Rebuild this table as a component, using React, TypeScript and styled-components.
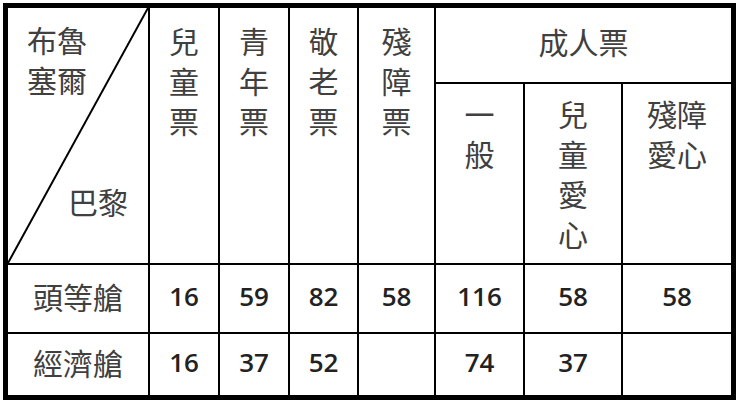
import React from "react";
import styled, { createGlobalStyle } from "styled-components";

const Global = createGlobalStyle`
  html, body { margin: 0; padding: 0; background: #fff; }
  body { font-family: "Noto Sans CJK TC", "Noto Sans", sans-serif; }
`;

const Page = styled.div`
  padding: 3px 0 0 3px;
  background: #fff;
`;

const Frame = styled.div`
  display: grid;
  width: max-content;
  background: #000;
  padding: 5px;
  gap: 2px;
  grid-template-columns: 140px 68px 68px 67px 75px 87px 96px 108px;
  grid-template-rows: 74px 179px 67px 61px;
`;

const Cell = styled.div<{ $col: string; $row: string }>`
  grid-column: ${(p) => p.$col};
  grid-row: ${(p) => p.$row};
  background: #fff;
  min-width: 0;
`;

const CornerCell = styled(Cell)`
  position: relative;
  display: flex;
  flex-direction: column;
  justify-content: space-between;
  padding: 11px 0 42px 19px;
  box-sizing: border-box;
  font-size: 30px;
  line-height: 40px;
  color: #404040;
`;

const CornerTop = styled.div`
  display: flex;
  flex-direction: column;
`;

const CornerBottom = styled.div`
  align-self: flex-end;
  padding-right: 20px;
`;

const Diagonal = styled.svg`
  position: absolute;
  inset: 0;
  width: 100%;
  height: 100%;
  pointer-events: none;
`;

const HeadCell = styled(Cell)<{ $pad: number }>`
  box-sizing: border-box;
  padding-top: ${(p) => p.$pad}px;
  text-align: center;
  font-size: 30px;
  line-height: 40px;
  color: #404040;
`;

const Line = styled.div``;

const LabelCell = styled(Cell)`
  display: flex;
  align-items: center;
  justify-content: center;
  padding-bottom: 6px;
  box-sizing: border-box;
  font-size: 30px;
  color: #404040;
  line-height: 1;
`;

const NumCell = styled(Cell)`
  display: flex;
  align-items: center;
  justify-content: center;
  padding-bottom: 6px;
  box-sizing: border-box;
  font-family: "Open Sans", "Liberation Sans", sans-serif;
  font-size: 26px;
  font-weight: 600;
  color: #222;
  line-height: 1;
`;

const topHeads: { col: number; lines: string[] }[] = [
  { col: 2, lines: ["兒", "童", "票"] },
  { col: 3, lines: ["青", "年", "票"] },
  { col: 4, lines: ["敬", "老", "票"] },
  { col: 5, lines: ["殘", "障", "票"] },
];

const subHeads: { col: number; lines: string[] }[] = [
  { col: 6, lines: ["一", "般"] },
  { col: 7, lines: ["兒", "童", "愛", "心"] },
  { col: 8, lines: ["殘障", "愛心"] },
];

const rows: { label: string; values: string[] }[] = [
  { label: "頭等艙", values: ["16", "59", "82", "58", "116", "58", "58"] },
  { label: "經濟艙", values: ["16", "37", "52", "", "74", "37", ""] },
];

export default function App() {
  return (
    <>
      <Global />
      <Page>
        <Frame>
          <CornerCell $col="1" $row="1 / span 2">
            <Diagonal viewBox="0 0 140 255" preserveAspectRatio="none">
              <line x1="140" y1="0" x2="0" y2="255" stroke="#000" strokeWidth="2" />
            </Diagonal>
            <CornerTop>
              <Line>布魯</Line>
              <Line>塞爾</Line>
            </CornerTop>
            <CornerBottom>巴黎</CornerBottom>
          </CornerCell>
          {topHeads.map((h) => (
            <HeadCell key={h.col} $col={String(h.col)} $row="1 / span 2" $pad={12}>
              {h.lines.map((l, i) => (
                <Line key={i}>{l}</Line>
              ))}
            </HeadCell>
          ))}
          <HeadCell $col="6 / span 3" $row="1" $pad={13}>
            成人票
          </HeadCell>
          {subHeads.map((h) => (
            <HeadCell key={h.col} $col={String(h.col)} $row="2" $pad={9}>
              {h.lines.map((l, i) => (
                <Line key={i}>{l}</Line>
              ))}
            </HeadCell>
          ))}
          {rows.map((r, ri) => (
            <React.Fragment key={r.label}>
              <LabelCell $col="1" $row={String(ri + 3)}>
                {r.label}
              </LabelCell>
              {r.values.map((v, vi) => (
                <NumCell key={vi} $col={String(vi + 2)} $row={String(ri + 3)}>
                  {v}
                </NumCell>
              ))}
            </React.Fragment>
          ))}
        </Frame>
      </Page>
    </>
  );
}
